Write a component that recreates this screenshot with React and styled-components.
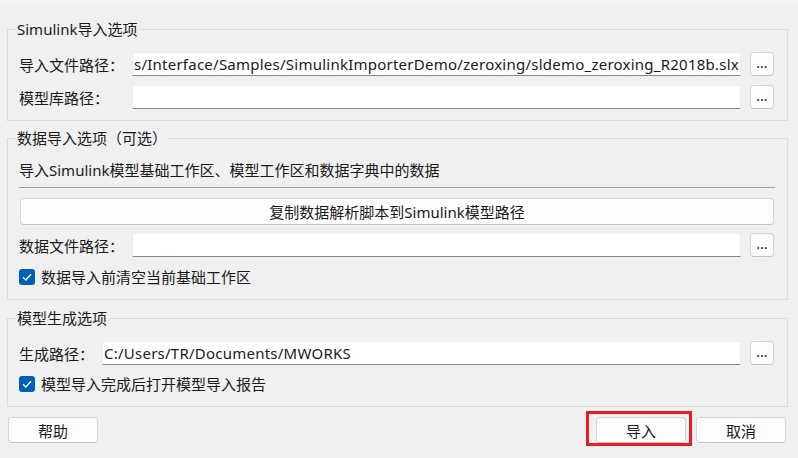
import styled, { createGlobalStyle } from "styled-components";

const GlobalStyle = createGlobalStyle`
  body {
    margin: 0;
    background: #f0f0f0;
    font-family: "Noto Sans", "Noto Sans CJK SC", sans-serif;
    font-size: 15px;
    color: #1a1a1a;
  }
`;

const Window = styled.div`
  width: 798px;
  height: 458px;
  box-sizing: border-box;
  padding: 19px 10px 0 7px;
  display: flex;
  flex-direction: column;
  background: linear-gradient(#f4f4f4 0 5px, #f0f0f0 5px);
`;

const Group = styled.fieldset`
  min-width: 0;
  margin: 0 0 ${(p) => p.$gap || 0}px;
  border: 1px solid #dadada;
  padding: ${(p) => p.$top || 13}px 13px ${(p) => p.$bottom || 11}px 11px;
  display: flex;
  flex-direction: column;
`;

const Legend = styled.legend`
  padding: 0 2px;
  margin-left: -4px;
  line-height: 20px;
`;

const Row = styled.div`
  display: flex;
  align-items: center;
  height: 24px;
  margin-top: ${(p) => p.$mt || 0}px;
`;

const Label = styled.span`
  width: ${(p) => p.$w}px;
  flex: none;
  white-space: nowrap;
`;

const Field = styled.div`
  flex: 1;
  min-width: 0;
  height: 24px;
  box-sizing: border-box;
  background: #fff;
  border: 1px solid #ededed;
  border-bottom-color: #878787;
  border-radius: 3px 3px 0 0;
  padding: 0 2px 0 1px;
  display: flex;
  align-items: center;
  overflow: hidden;
  white-space: nowrap;
  letter-spacing: 0.24px;
`;

const Browse = styled.button`
  flex: none;
  width: 24px;
  height: 24px;
  margin-left: 9px;
  padding: 0 0 3px;
  border: 1px solid #d4d4d4;
  border-bottom-color: #c2c2c2;
  border-radius: 4px;
  background: #fdfdfd;
  font: inherit;
  font-size: 14px;
  color: #1a1a1a;
  line-height: 1;
`;

const Note = styled.div`
  line-height: 20px;
`;

const Divider = styled.hr`
  margin: 7px 0 0;
  border: none;
  border-top: 1px solid #a0a0a0;
  width: 756px;
`;

const WideButton = styled.button`
  margin: 10px 0 0 1px;
  width: 754px;
  height: 27px;
  border: 1px solid #d4d4d4;
  border-bottom-color: #c2c2c2;
  border-radius: 4px;
  background: #fdfdfd;
  font: inherit;
  color: #1a1a1a;
`;

const Check = styled.label`
  display: flex;
  align-items: center;
  gap: 6px;
  line-height: 20px;
  margin-top: ${(p) => p.$mt || 0}px;
`;

const Box = styled.span`
  width: 16px;
  height: 16px;
  border-radius: 3px;
  background: #005fb8;
  display: flex;
  align-items: center;
  justify-content: center;
`;

const Footer = styled.div`
  display: flex;
  gap: 10px;
  margin: 10px 2px 0 1px;
`;

const Spacer = styled.div`
  flex: 1;
`;

const DialogButton = styled.button`
  position: relative;
  width: 90px;
  height: 26px;
  border: 1px solid #d4d4d4;
  border-bottom-color: #c2c2c2;
  border-radius: 4px;
  background: #fdfdfd;
  font: inherit;
  color: #1a1a1a;
  padding: 0;
`;

const Highlight = styled.span`
  position: absolute;
  top: -7px;
  bottom: -4px;
  left: -11px;
  right: -7px;
  border: 3px solid #ec1c24;
  pointer-events: none;
`;

const Tick = () => (
  <svg width="10" height="8" viewBox="0 0 10 8">
    <path d="M1 4.2 L3.8 7 L9 1.2" fill="none" stroke="#fff" strokeWidth="1.3" />
  </svg>
);

const CheckOption = ({ children, mt }) => (
  <Check $mt={mt}>
    <Box>
      <Tick />
    </Box>
    {children}
  </Check>
);

export default function App() {
  return (
    <Window>
      <GlobalStyle />
      <Group $gap={7}>
        <Legend>Simulink导入选项</Legend>
        <Row>
          <Label $w={113}>导入文件路径：</Label>
          <Field>s/Interface/Samples/SimulinkImporterDemo/zeroxing/sldemo_zeroxing_R2018b.slx</Field>
          <Browse>...</Browse>
        </Row>
        <Row $mt={9}>
          <Label $w={113}>模型库路径：</Label>
          <Field />
          <Browse>...</Browse>
        </Row>
      </Group>

      <Group $gap={8} $top={12} $bottom={12}>
        <Legend>数据导入选项（可选）</Legend>
        <Note>导入Simulink模型基础工作区、模型工作区和数据字典中的数据</Note>
        <Divider />
        <WideButton>复制数据解析脚本到Simulink模型路径</WideButton>
        <Row $mt={8}>
          <Label $w={113}>数据文件路径：</Label>
          <Field />
          <Browse>...</Browse>
        </Row>
        <CheckOption mt={10}>数据导入前清空当前基础工作区</CheckOption>
      </Group>

      <Group $bottom={12}>
        <Legend>模型生成选项</Legend>
        <Row>
          <Label $w={83}>生成路径：</Label>
          <Field>C:/Users/TR/Documents/MWORKS</Field>
          <Browse>...</Browse>
        </Row>
        <CheckOption mt={9}>模型导入完成后打开模型导入报告</CheckOption>
      </Group>

      <Footer>
        <DialogButton>帮助</DialogButton>
        <Spacer />
        <DialogButton>
          导入
          <Highlight />
        </DialogButton>
        <DialogButton>取消</DialogButton>
      </Footer>
    </Window>
  );
}
